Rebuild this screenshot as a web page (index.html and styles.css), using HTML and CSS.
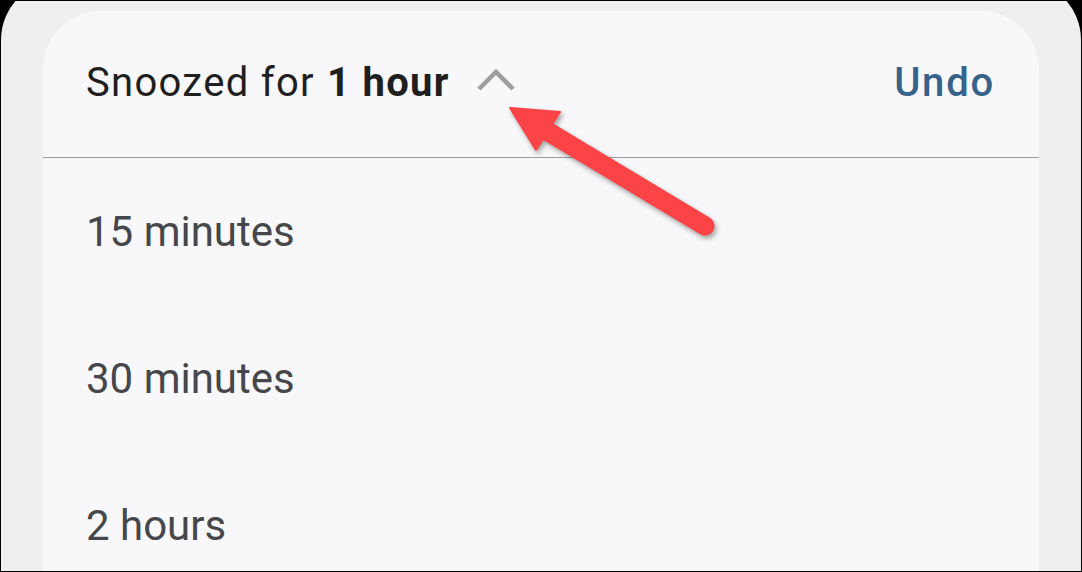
FILE: index.html
```html
<!DOCTYPE html>
<html>
<head>
<meta charset="utf-8">
<link rel="stylesheet" href="styles.css">
</head>
<body>
<div class="frame">
  <div class="screen">
    <div class="card">
      <div class="header">
        <div class="title">
          <span class="snz">Snoozed for</span>
          <span class="dur">1 hour</span>
          <svg class="chev" width="40" height="26" viewBox="0 0 40 26">
            <polyline points="2,22 19,5 36,22" fill="none" stroke="#9e9e9e" stroke-width="4.5"/>
          </svg>
        </div>
        <div class="undo">Undo</div>
      </div>
      <div class="item">15 minutes</div>
      <div class="item">30 minutes</div>
      <div class="item">2 hours</div>
    </div>
  </div>
  <svg class="arrow" width="1082" height="572" viewBox="0 0 1082 572">
    <g class="arrow-g">
      <line x1="532" y1="122" x2="705" y2="226" stroke="#fc4346" stroke-width="19" stroke-linecap="round"/>
      <polygon points="510,108 560,112 536,150" fill="#fc4346" stroke="#fc4346" stroke-width="2" stroke-linejoin="round"/>
    </g>
  </svg>
</div>
</body>
</html>
```
FILE: styles.css
```css
html, body {
  margin: 0;
  padding: 0;
  background: #000;
}
.frame {
  position: relative;
  width: 1082px;
  height: 572px;
  box-sizing: border-box;
  border: 1px solid #000;
  background: #000;
  overflow: hidden;
}
.screen {
  margin-top: -21px;
  height: 700px;
  border-radius: 60px;
  background: #efeff1;
  padding: 31px 42px 0 42px;
  box-sizing: border-box;
}
.card {
  height: 700px;
  background: #f8f8fa;
  border-radius: 58px 58px 0 0;
  font-family: Roboto, "Liberation Sans", sans-serif;
}
.header {
  height: 143px;
  padding: 0 46px 3px 43px;
  border-bottom: 1px solid #9e9e9e;
  display: flex;
  align-items: center;
  justify-content: space-between;
}
.title {
  display: flex;
  align-items: center;
  font-size: 40px;
  color: #1f1f1f;
  letter-spacing: 1.3px;
}
.snz {
  font-weight: 400;
}
.dur {
  font-weight: 700;
  margin-left: 12px;
}
.chev {
  margin-left: 27px;
  margin-top: -6px;
}
.undo {
  font-size: 40px;
  font-weight: 500;
  color: #37628a;
  letter-spacing: 1.8px;
  margin-right: -2px;
}
.item {
  height: 147px;
  display: flex;
  align-items: center;
  padding-left: 43px;
  font-size: 42px;
  color: #45474a;
}
.arrow {
  position: absolute;
  left: -1px;
  top: -1px;
}
.arrow-g {
  filter: drop-shadow(2px 3px 2.5px rgba(0,0,0,0.35));
}
```
